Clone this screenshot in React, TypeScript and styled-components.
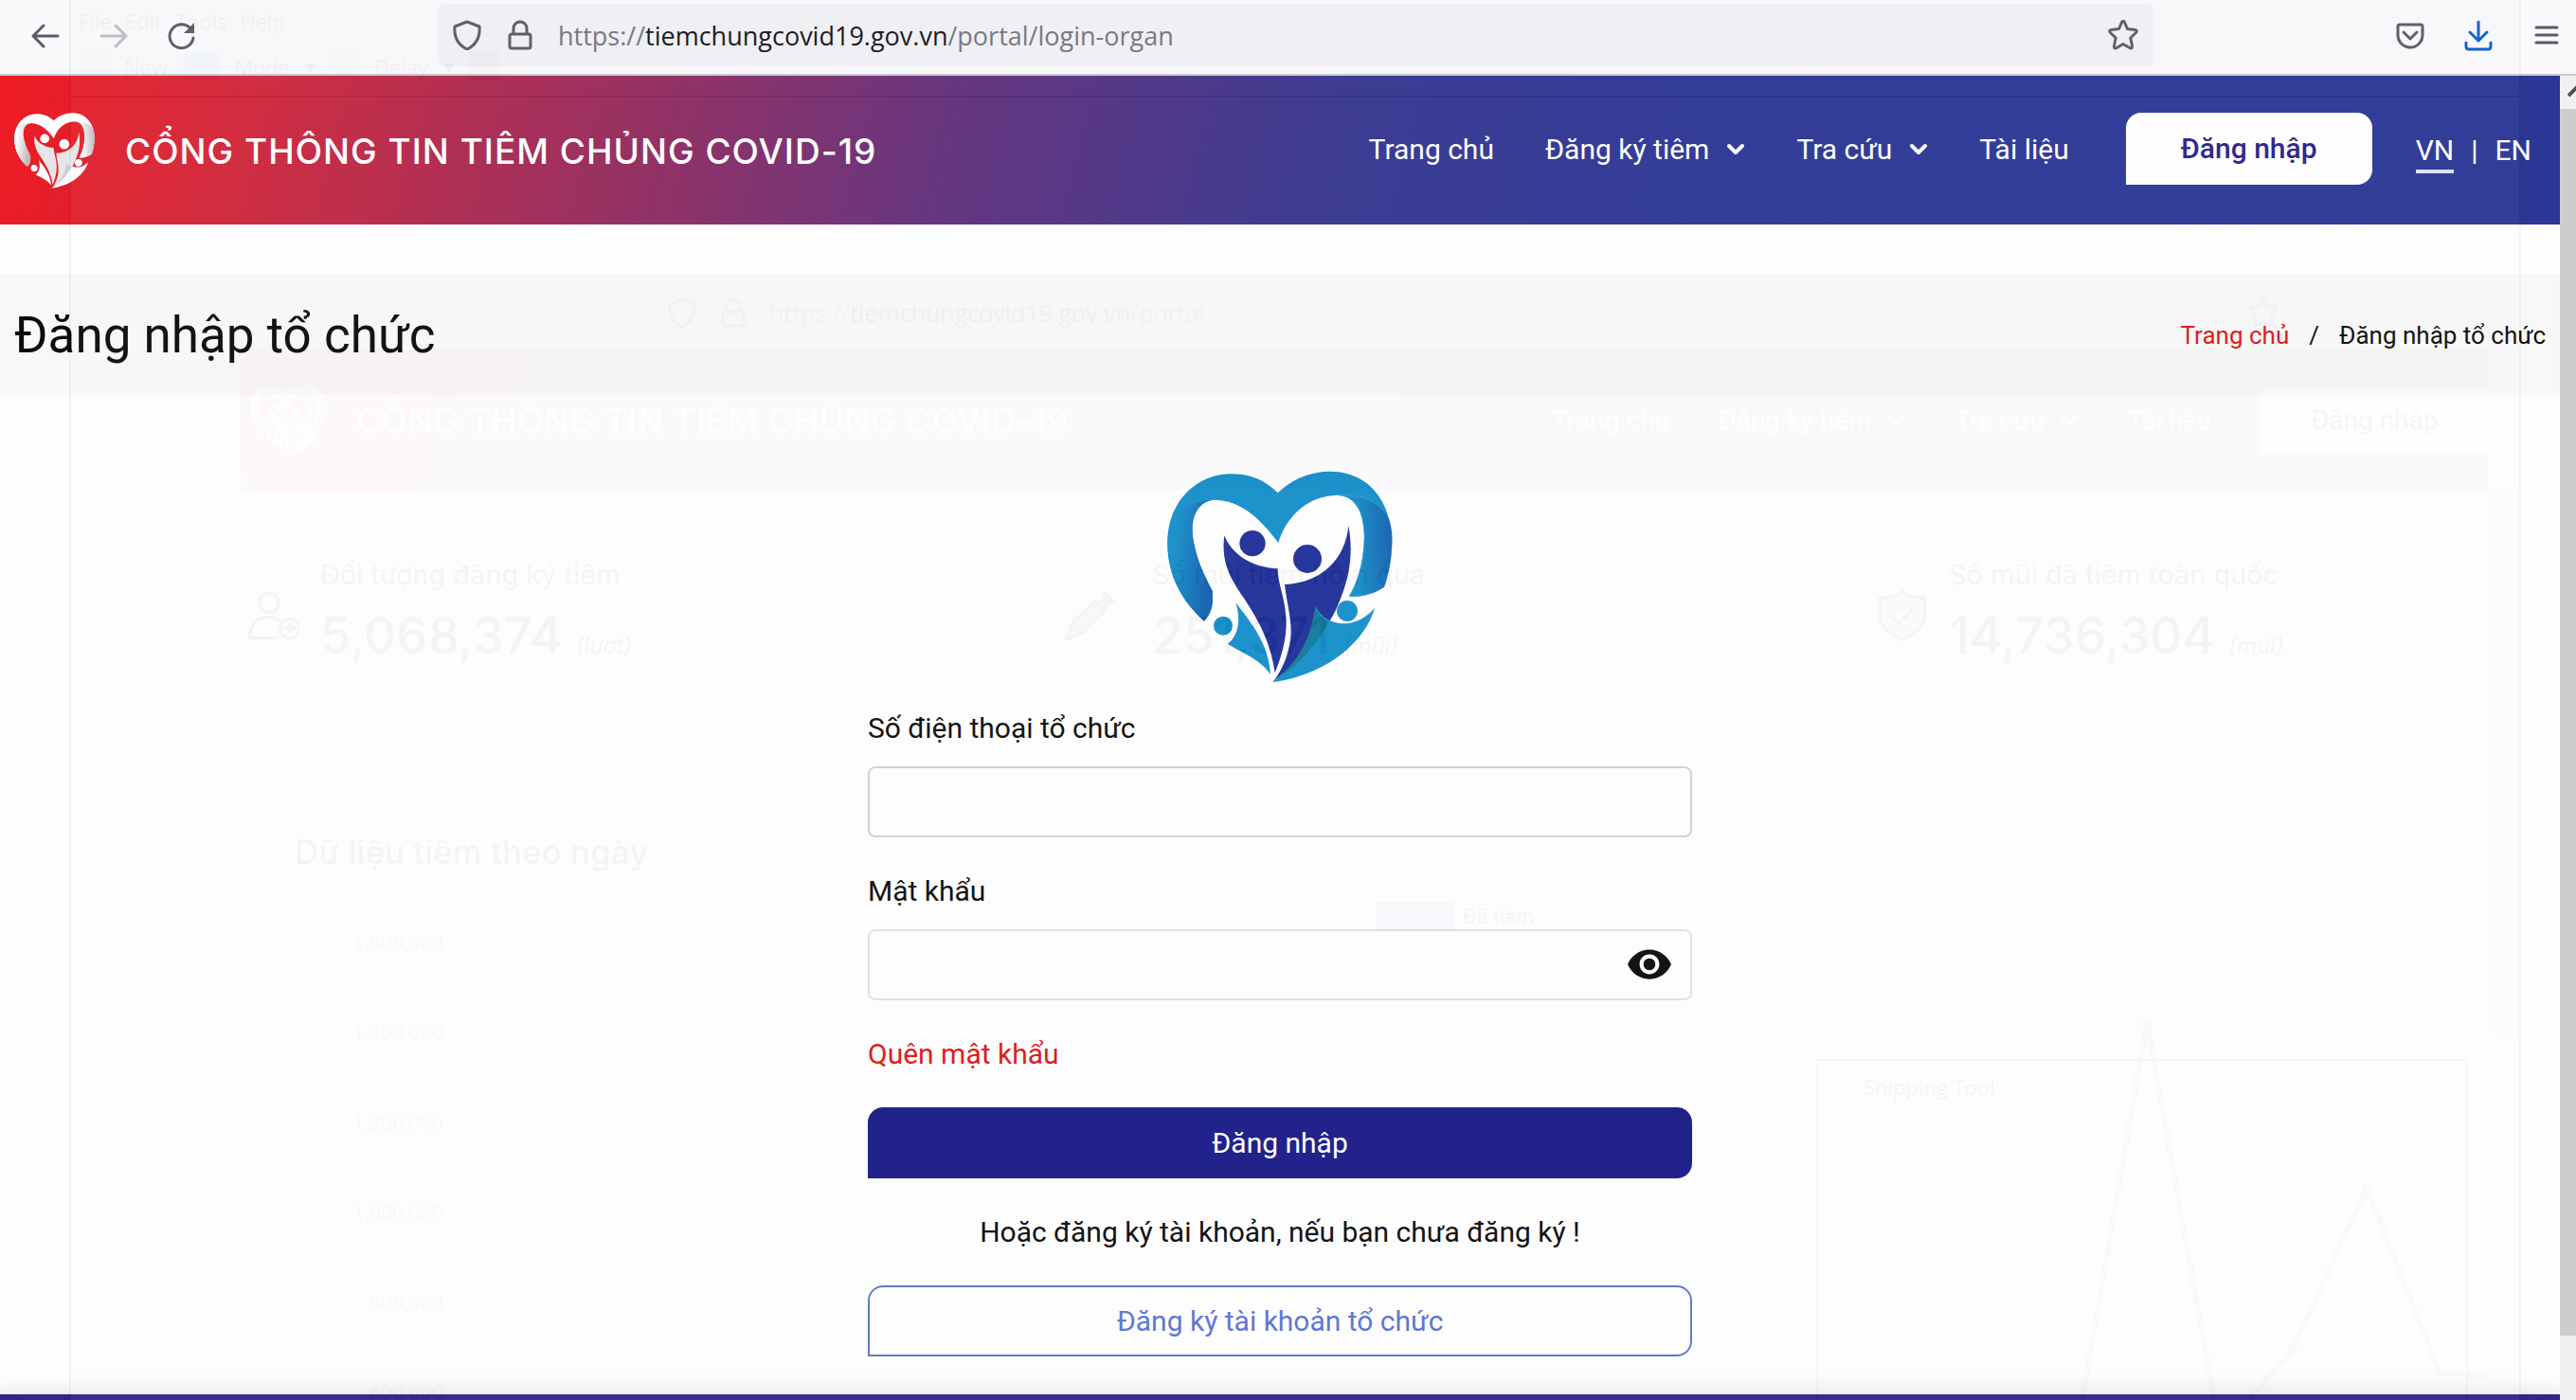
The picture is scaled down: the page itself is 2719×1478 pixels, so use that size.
import React, { useState } from "react";
import styled, { createGlobalStyle } from "styled-components";
import { MdVisibility, MdVisibilityOff } from "react-icons/md";

const GlobalStyle = createGlobalStyle`
  *, *::before, *::after { box-sizing: border-box; }
  body { margin: 0; background: #fefefe; font-family: Roboto, "Liberation Sans", sans-serif; color: #0b0b0b; }
  button, input { font: inherit; color: inherit; }
  button { cursor: pointer; }
  a { color: inherit; text-decoration: none; }
  svg { display: block; flex: none; }
`;

const Window = styled.div`
  position: relative;
  display: flex;
  flex-direction: column;
  height: 100vh;
  overflow: hidden;
`;

/* ---------- browser toolbar ---------- */

const Toolbar = styled.div`
  display: flex;
  align-items: flex-start;
  height: 80px;
  padding-top: 4px;
  background: #f9f9fb;
  border-bottom: 2px solid #c9c9d1;
  font-family: "Open Sans", "Noto Sans", sans-serif;
  color: #5b5b66;
`;

const ToolGroup = styled.div<{ $side: "left" | "right" }>`
  display: flex;
  align-items: center;
  height: 68px;
  width: ${(p) => (p.$side === "left" ? "462px" : "446px")};
  gap: 40px;
  padding: ${(p) => (p.$side === "left" ? "0 0 0 32px" : "0 15px 0 0")};
  justify-content: ${(p) => (p.$side === "left" ? "flex-start" : "flex-end")};
`;

const ToolButton = styled.button<{ $tone?: string }>`
  display: grid;
  place-items: center;
  width: 32px;
  height: 32px;
  padding: 0;
  border: 0;
  background: none;
  color: ${(p) => p.$tone || "#5b5b66"};
`;

const AddressBar = styled.div`
  flex: 1;
  display: flex;
  align-items: center;
  gap: 24px;
  height: 66px;
  padding: 0 16px 0 15px;
  border-radius: 8px;
  background: #f0f0f4;
`;

const Address = styled.div`
  flex: 1;
  padding-top: 2px;
  font-size: 27px;
  line-height: 40px;
  color: #74747c;
  b { font-weight: 400; color: #15141a; }
`;

/* ---------- page frame ---------- */

const Viewport = styled.div`
  flex: 1;
  min-height: 0;
  display: flex;
`;

const Page = styled.div`
  flex: 1;
  min-width: 0;
  overflow: hidden;
`;

const ScrollTrack = styled.div`
  display: flex;
  flex-direction: column;
  width: 17px;
  background: #f0f0f0;
  overflow: hidden;
`;

const ScrollArrow = styled.div`
  height: 35px;
  padding: 9px 0 0 8px;
  color: #505050;
`;

const ScrollThumb = styled.div`
  height: 1295px;
  max-height: 93%;
  background: #cdcdcd;
`;

/* ---------- site header ---------- */

const Header = styled.header`
  display: flex;
  align-items: center;
  justify-content: space-between;
  height: 157px;
  padding: 0 30px 0 15px;
  color: #fff;
  background: linear-gradient(105deg, #f01b23 0%, #d0253a 10%, #622f7b 37%, #36358f 52%, #2c3696 66%, #2a3795 100%);
`;

const Brand = styled.a`
  display: flex;
  align-items: center;
  gap: 32px;
  font-family: Inter, Roboto, sans-serif;
  font-size: 37px;
  font-weight: 500;
  line-height: 48px;
  letter-spacing: 1px;
  span { padding-top: 2px; }
`;

const Nav = styled.nav`
  display: flex;
  align-items: center;
  gap: 46px;
  padding-bottom: 4px;
  font-size: 30px;
  line-height: 40px;
`;

const NavLinks = styled.div`
  display: flex;
  gap: 54px;
  padding: 2px 14px 0 0;
`;

const NavLink = styled.a`
  display: flex;
  align-items: center;
  gap: 18px;
`;

const cornered = "16px 16px 16px 0";

const LoginButton = styled.button`
  width: 260px;
  height: 76px;
  border: 0;
  border-radius: ${cornered};
  background: #fff;
  color: #2b1f8c;
  font-weight: 500;
`;

const Languages = styled.div`
  display: flex;
  align-items: center;
  gap: 18px;
  padding-top: 4px;
`;

const Language = styled.a<{ $active?: boolean }>`
  border-bottom: 4px solid ${(p) => (p.$active ? "#dfe1f5" : "transparent")};
  border-top: 4px solid transparent;
`;

/* ---------- title band ---------- */

const TitleBand = styled.section`
  display: flex;
  align-items: center;
  justify-content: space-between;
  height: 127px;
  margin-top: 53px;
  padding: 0 15px;
  background: #f8f8f8;
`;

const Title = styled.h1`
  margin: 0;
  font-size: 53px;
  font-weight: 400;
  line-height: 72px;
`;

const Crumbs = styled.nav`
  display: flex;
  gap: 21px;
  font-size: 26px;
  line-height: 36px;
`;

const RedLink = styled.a`
  color: #e01414;
`;

/* ---------- login form ---------- */

const Form = styled.form`
  display: flex;
  flex-direction: column;
  width: 100%;
  max-width: 870px;
  margin: 0 auto;
  padding-top: 80px;
  font-size: 30px;
  line-height: 40px;
`;

const Emblem = styled.div`
  align-self: center;
  margin-bottom: 28px;
`;

const Field = styled.div`
  display: flex;
  flex-direction: column;
  gap: 20px;
  margin-bottom: 37px;
`;

const InputBox = styled.div`
  position: relative;
`;

const Input = styled.input<{ $soft?: boolean }>`
  display: block;
  width: 100%;
  height: 75px;
  padding: 0 24px;
  border: 2px solid ${(p) => (p.$soft ? "#dfe1e3" : "#cfd2d4")};
  border-radius: 8px;
  background: transparent;
  outline: none;
`;

const EyeButton = styled.button`
  position: absolute;
  right: 20px;
  top: 12px;
  padding: 0;
  border: 0;
  background: none;
`;

const Submit = styled.button<{ $outline?: boolean }>`
  height: 75px;
  border: 2px solid ${(p) => (p.$outline ? "#5a79bf" : "#191a87")};
  border-radius: ${cornered};
  background: ${(p) => (p.$outline ? "transparent" : "#191a87")};
  color: ${(p) => (p.$outline ? "#5a73cf" : "#fff")};
`;

const Hint = styled.p`
  margin: 0;
  padding: 37px 0 36px;
  text-align: center;
`;

const Forgot = styled(RedLink)`
  align-self: flex-start;
  margin-bottom: 36px;
`;

const Footer = styled.footer`
  height: 120px;
  margin-top: 40px;
  background: #34248a;
  box-shadow: 0 0 24px rgba(0, 0, 0, 0.14);
`;

/* ---------- translucent window in front ---------- */

const Veil = styled.div`
  position: absolute;
  inset: 0 58px 0 73px;
  overflow: hidden;
  pointer-events: none;
  opacity: 0.035;
  background: #f4f4f4;
  border: solid #000;
  border-width: 0 2px;
`;

const VeilMenu = styled.div`
  display: flex;
  flex-direction: column;
  gap: 12px;
  height: 103px;
  padding: 4px 8px;
  border-bottom: 2px solid #000;
  font: 22px/36px "Open Sans", sans-serif;
`;

const VeilRow = styled.div<{ $gap: number }>`
  display: flex;
  align-items: center;
  gap: ${(p) => p.$gap}px;
`;

const VeilSwatch = styled.i<{ $w: number; $color: string }>`
  width: ${(p) => p.$w}px;
  height: 30px;
  background: ${(p) => p.$color};
`;

const VeilPage = styled.div`
  margin: 194px 32px 0 179px;
`;

const VeilToolbar = styled.div`
  display: flex;
  align-items: center;
  gap: 22px;
  height: 72px;
  padding: 0 222px 6px 450px;
  color: #555;
  font: 25px/36px "Open Sans", sans-serif;
  b { font-weight: 400; color: #000; }
  span { flex: 1; }
`;

const VeilHeader = styled.div`
  display: flex;
  align-items: center;
  height: 149px;
  padding-left: 10px;
  color: #fff;
  background: linear-gradient(105deg, #f5767b 0%, #b493bb 36%, #7f93dc 65%);
`;

const VeilBrand = styled.div`
  flex: 1;
  display: flex;
  align-items: center;
  gap: 32px;
  font-family: Inter, Roboto, sans-serif;
  font-size: 35px;
  font-weight: 500;
  letter-spacing: 1px;
`;

const VeilNav = styled.div`
  display: flex;
  align-items: center;
  gap: 52px;
  font-size: 28px;
`;

const VeilLogin = styled.div`
  width: 241px;
  height: 73px;
  border-radius: 16px 0 0 0;
  background: #fff;
  color: #2b1f8c;
  text-align: center;
  line-height: 73px;
`;

const VeilStats = styled.div`
  display: grid;
  grid-template-columns: 862px 857px 1fr;
  padding: 68px 0 0 8px;
`;

const VeilStat = styled.div<{ $gap: number }>`
  display: flex;
  align-items: center;
  gap: ${(p) => p.$gap}px;
`;

const VeilFigure = styled.div`
  font-family: Inter, Roboto, sans-serif;
  font-size: 29px;
  line-height: 42px;
  strong { font-size: 53px; font-weight: 500; line-height: 86px; margin-right: 14px; }
  em { font-size: 24px; }
`;

const VeilHeading = styled.div`
  padding: 162px 0 0 57px;
  font-family: Inter, Roboto, sans-serif;
  font-size: 35px;
  font-weight: 500;
  line-height: 46px;
`;

const VeilLegend = styled.div`
  display: flex;
  align-items: center;
  justify-content: center;
  gap: 10px;
  height: 28px;
  margin: 31px 0 0 190px;
  font-size: 22px;
`;

const VeilScroll = styled.div`
  position: absolute;
  top: 518px;
  right: 0;
  width: 32px;
  height: 574px;
  background: #c8c8c8;
`;

const VeilDialog = styled.div`
  position: absolute;
  top: 1118px;
  right: 54px;
  width: 688px;
  height: 400px;
  padding: 9px 48px;
  border: 2px solid #333;
  font: 22px/36px "Open Sans", sans-serif;
`;

const VeilChart = styled.svg`
  width: 2373px;
  height: 500px;
`;

/* ---------- drawings ---------- */

const palettes = {
  colour: { ribbon: "#1690ca", fold: "#1560ae", body: "#1f3099", child: "#1690ca", overlap: "#117a9c" },
  white: { ribbon: "#ffffff", fold: "#b9b9be", body: "#e6e6e8", child: "#ffffff", overlap: "#cfcfd3" },
};

function HeartLogo({ tone, width, id }: { tone: "colour" | "white"; width: number; id: string }) {
  const c = palettes[tone];
  return (
    <svg width={width} height={Math.round((width * 672) / 714)} viewBox="96 50 714 672" aria-hidden="true">
      <defs>
        <linearGradient id={`${id}-l`} x1="0" x2="1" y1="0.3" y2="0.6">
          <stop offset="0.15" stopColor={c.ribbon} />
          <stop offset="0.9" stopColor={c.fold} />
        </linearGradient>
        <linearGradient id={`${id}-r`} x1="0" x2="1" y1="0.5" y2="0.4">
          <stop offset="0.3" stopColor={c.ribbon} />
          <stop offset="1" stopColor={c.fold} />
        </linearGradient>
      </defs>
      <path
        fill={c.ribbon}
        d="M446 120C405 78 355 60 300 60C185 60 97 150 97 278C97 385 145 465 213 526C240 498 242 468 239 430C215 385 190 335 178 265C166 190 200 142 248 142C330 145 390 200 448 278C470 205 530 130 635 127C695 130 720 185 720 262C718 340 700 400 672 448C712 450 750 440 783 418C800 370 808 320 808 262C800 140 730 52 610 52C540 54 488 80 446 120Z"
      />
      <path
        fill={`url(#${id}-l)`}
        d="M122 195C155 155 200 142 248 142C200 142 166 190 178 265C190 335 215 385 239 430C242 468 240 498 213 526C145 465 97 385 97 278C98 245 106 218 122 195Z"
      />
      <path
        fill={`url(#${id}-r)`}
        stroke={tone === "colour" ? "#62b6e2" : "none"}
        strokeWidth="1"
        d="M635 127C715 120 775 155 797 200C804 220 808 240 808 262C808 320 800 370 783 418C750 440 712 450 672 448C700 400 718 340 720 262C720 185 695 130 635 127Z"
      />
      <path
        fill={c.body}
        d="M277 255C300 315 365 357 446 360C446 410 470 450 473 525C474 590 455 645 437 690C425 600 392 535 340 455C295 390 266 340 277 255Z"
      />
      <path
        fill={c.body}
        d="M670 224C660 330 585 405 468 410C474 465 488 510 488 560C486 630 455 690 430 720C510 655 590 570 628 495C665 415 690 330 670 224Z"
      />
      <path fill={c.child} d="M313 468C370 540 418 605 423 695C395 650 330 625 288 599C318 573 332 530 313 468Z" />
      <path fill={c.child} d="M565 478C585 515 615 532 655 534C695 533 730 512 753 484C728 575 625 690 430 720C520 650 560 570 565 478Z" />
      <path fill={c.overlap} d="M565 478C573 503 590 519 608 527C575 595 515 665 430 720C520 650 552 570 565 478Z" />
      <circle cx="366" cy="280" r="41" fill={tone === "white" ? "#fff" : c.body} />
      <circle cx="540" cy="329" r="45" fill={tone === "white" ? "#fff" : c.body} />
      <circle cx="273" cy="541" r="30" fill={c.child} />
      <circle cx="666" cy="494" r="33" fill={c.child} />
    </svg>
  );
}

function Line({ d, size = 32, width = 3, fill = "none" }: { d: string; size?: number; width?: number; fill?: string }) {
  return (
    <svg
      width={size}
      height={size}
      viewBox="0 0 32 32"
      fill={fill}
      stroke="currentColor"
      strokeWidth={width}
      strokeLinecap="round"
      strokeLinejoin="round"
      aria-hidden="true"
    >
      <path d={d} />
    </svg>
  );
}

const icons = {
  back: "M29 16H3M14 5L3 16L14 27",
  forward: "M3 16H29M18 5L29 16L18 27",
  shield: "M16 2L29 7C30 18 26 26 16 31C6 26 2 18 3 7Z",
  lock: "M7 15H25Q27 15 27 17V28Q27 30 25 30H7Q5 30 5 28V17Q5 15 7 15ZM9 15V9A7 7 0 0 1 23 9V15",
  star: "M14.500 2.500Q16 0 17.500 2.500L20.500 9.500L28.500 10.500Q31.500 11 29.500 13.500L23.800 19L25.500 27.500Q25.800 31 22.800 29.500L16 25.500L9.200 29.500Q6.200 31 6.500 27.500L8.200 19L2.500 13.500Q0.500 11 3.500 10.500L11.500 9.500Z",
  pocket: "M5 4H27Q29 4 29 6V15A13 13 0 0 1 3 15V6Q3 4 5 4ZM9 12L16 19L23 12",
  download: "M16 1V20M7 12L16 21L25 12M3 23V27Q3 30 6 30H26Q29 30 29 27V23",
  menu: "M5 7H27M5 15H27M5 23H27",
};

function Reload() {
  return (
    <svg width="32" height="32" viewBox="0 0 32 32" fill="none" stroke="currentColor" strokeWidth="3" aria-hidden="true">
      <path d="M28 18A12.500 12.500 0 1 1 25 8" strokeLinecap="round" />
      <path d="M29 2V13H18Z" fill="currentColor" stroke="none" />
    </svg>
  );
}

function Chevron() {
  return (
    <svg width="20" height="14" viewBox="0 0 20 14" fill="none" stroke="currentColor" strokeWidth="4" strokeLinecap="round" strokeLinejoin="round" aria-hidden="true">
      <path d="M3 3L10 10L17 3" />
    </svg>
  );
}

const axis = ["1,600,000", "1,400,000", "1,200,000", "1,000,000", "800,000", "600,000"];
const points = [[2012, 98], [2166, 443], [2244, 273], [2321, 468]];

function FadedWindow() {
  return (
    <Veil aria-hidden="true">
      <VeilMenu>
        <VeilRow $gap={14}><span>File</span><span>Edit</span><span>Tools</span><span>Help</span></VeilRow>
        <VeilRow $gap={16}>
          <VeilSwatch $w={32} $color="#ddd" /><span>New</span>
          <VeilSwatch $w={38} $color="#5aa9ee" /><span>Mode</span><span>▾</span>
          <VeilSwatch $w={30} $color="#ddd" /><span>Delay</span><span>▾</span>
          <VeilSwatch $w={32} $color="#889" />
        </VeilRow>
      </VeilMenu>
      <VeilPage>
        <VeilToolbar>
          <Line d={icons.shield} /><Line d={icons.lock} />
          <span>https://<b>tiemchungcovid19.gov.vn</b>/portal</span>
          <Line d={icons.star} />
        </VeilToolbar>
        <VeilHeader>
          <VeilBrand><HeartLogo tone="white" width={80} id="veil" />CỔNG THÔNG TIN TIÊM CHỦNG COVID-19</VeilBrand>
          <VeilNav>
            <span>Trang chủ</span>
            <VeilRow $gap={16}>Đăng ký tiêm <Chevron /></VeilRow>
            <VeilRow $gap={16}>Tra cứu <Chevron /></VeilRow>
            <span>Tài liệu</span>
            <VeilLogin>Đăng nhập</VeilLogin>
          </VeilNav>
        </VeilHeader>
        <VeilStats>
          <VeilStat $gap={22}>
            <Line size={54} width={2} d="M13 2A6 6 0 1 1 12.900 2M1 30C1 20 6 17 13 17C17 17 19 18 20 20M1 30H18M26 18A6 6 0 1 1 25.900 18M26 21V27M23 24H29" />
            <VeilFigure>Đối tượng đăng ký tiêm<br /><strong>5,068,374</strong><em>(lượt)</em></VeilFigure>
          </VeilStat>
          <VeilStat $gap={38}>
            <Line size={54} width={2} fill="#6a6ad0" d="M1 31L5 20L19 7L25 13L12 26ZM21 9L26 4L29 7L24 12M25 2L31 8" />
            <VeilFigure>Số mũi tiêm hôm qua<br /><strong>251,371</strong><em>(mũi)</em></VeilFigure>
          </VeilStat>
          <VeilStat $gap={22}>
            <Line size={54} width={2} fill="#aab" d="M16 1C20 4 25 5 30 5V15C30 23 24 28 16 31C8 28 2 23 2 15V5C7 5 12 4 16 1ZM9 16L14 21L23 11" />
            <VeilFigure>Số mũi đã tiêm toàn quốc<br /><strong>14,736,304</strong><em>(mũi)</em></VeilFigure>
          </VeilStat>
        </VeilStats>
        <VeilHeading>Dữ liệu tiêm theo ngày</VeilHeading>
        <VeilLegend><VeilSwatch $w={82} $color="#5a5ad6" />Đã tiêm</VeilLegend>
        <VeilChart viewBox="0 0 2373 500">
          {axis.map((label, i) => (
            <text key={label} x="214" y={22 + i * 95} textAnchor="end" fontSize="22" fill="#777">{label}</text>
          ))}
          <path
            d="M1944 496L2012 98L2083 496M2121 496L2166 443L2244 273L2321 468L2372 471"
            fill="none"
            stroke="#8f8fe0"
            strokeWidth="6"
            strokeLinejoin="round"
          />
          {points.map(([x, y]) => <circle key={x} cx={x} cy={y} r="5" fill="#f06070" />)}
        </VeilChart>
      </VeilPage>
      <VeilScroll />
      <VeilDialog>Snipping Tool</VeilDialog>
    </Veil>
  );
}

export default function App() {
  const [shown, setShown] = useState(false);
  return (
    <Window>
      <GlobalStyle />
      <Toolbar>
        <ToolGroup $side="left">
          <ToolButton aria-label="Back"><Line d={icons.back} /></ToolButton>
          <ToolButton aria-label="Forward" $tone="#bcbcc2"><Line d={icons.forward} /></ToolButton>
          <ToolButton aria-label="Reload"><Reload /></ToolButton>
        </ToolGroup>
        <AddressBar>
          <Line d={icons.shield} />
          <Line d={icons.lock} />
          <Address>https://<b>tiemchungcovid19.gov.vn</b>/portal/login-organ</Address>
          <ToolButton aria-label="Bookmark"><Line d={icons.star} /></ToolButton>
        </AddressBar>
        <ToolGroup $side="right">
          <ToolButton aria-label="Pocket"><Line d={icons.pocket} /></ToolButton>
          <ToolButton aria-label="Downloads" $tone="#0a5ed0"><Line d={icons.download} /></ToolButton>
          <ToolButton aria-label="Menu"><Line d={icons.menu} /></ToolButton>
        </ToolGroup>
      </Toolbar>

      <Viewport>
        <Page>
          <Header>
            <Brand href="#">
              <HeartLogo tone="white" width={85} id="brand" />
              <span>CỔNG THÔNG TIN TIÊM CHỦNG COVID-19</span>
            </Brand>
            <Nav>
              <NavLinks>
                <NavLink href="#">Trang chủ</NavLink>
                <NavLink href="#">Đăng ký tiêm <Chevron /></NavLink>
                <NavLink href="#">Tra cứu <Chevron /></NavLink>
                <NavLink href="#">Tài liệu</NavLink>
              </NavLinks>
              <LoginButton>Đăng nhập</LoginButton>
              <Languages>
                <Language href="#" $active>VN</Language>
                <span>|</span>
                <Language href="#">EN</Language>
              </Languages>
            </Nav>
          </Header>

          <TitleBand>
            <Title>Đăng nhập tổ chức</Title>
            <Crumbs aria-label="Breadcrumb">
              <RedLink href="#">Trang chủ</RedLink>
              <span>/</span>
              <span>Đăng nhập tổ chức</span>
            </Crumbs>
          </TitleBand>

          <Form onSubmit={(e) => e.preventDefault()}>
            <Emblem><HeartLogo tone="colour" width={238} id="emblem" /></Emblem>
            <Field>
              <label htmlFor="phone">Số điện thoại tổ chức</label>
              <Input id="phone" type="tel" />
            </Field>
            <Field>
              <label htmlFor="password">Mật khẩu</label>
              <InputBox>
                <Input id="password" type={shown ? "text" : "password"} $soft />
                <EyeButton type="button" aria-label="Hiện mật khẩu" onClick={() => setShown(!shown)}>
                  {shown ? <MdVisibilityOff size={50} /> : <MdVisibility size={50} />}
                </EyeButton>
              </InputBox>
            </Field>
            <Forgot href="#">Quên mật khẩu</Forgot>
            <Submit type="submit">Đăng nhập</Submit>
            <Hint>Hoặc đăng ký tài khoản, nếu bạn chưa đăng ký !</Hint>
            <Submit type="button" $outline>Đăng ký tài khoản tổ chức</Submit>
          </Form>
          <Footer />
        </Page>
        <ScrollTrack>
          <ScrollArrow>
            <svg width="16" height="14" viewBox="0 0 16 14" fill="none" stroke="currentColor" strokeWidth="4" aria-hidden="true">
              <path d="M1 12L11 2L21 12" />
            </svg>
          </ScrollArrow>
          <ScrollThumb />
        </ScrollTrack>
      </Viewport>
      <FadedWindow />
    </Window>
  );
}
